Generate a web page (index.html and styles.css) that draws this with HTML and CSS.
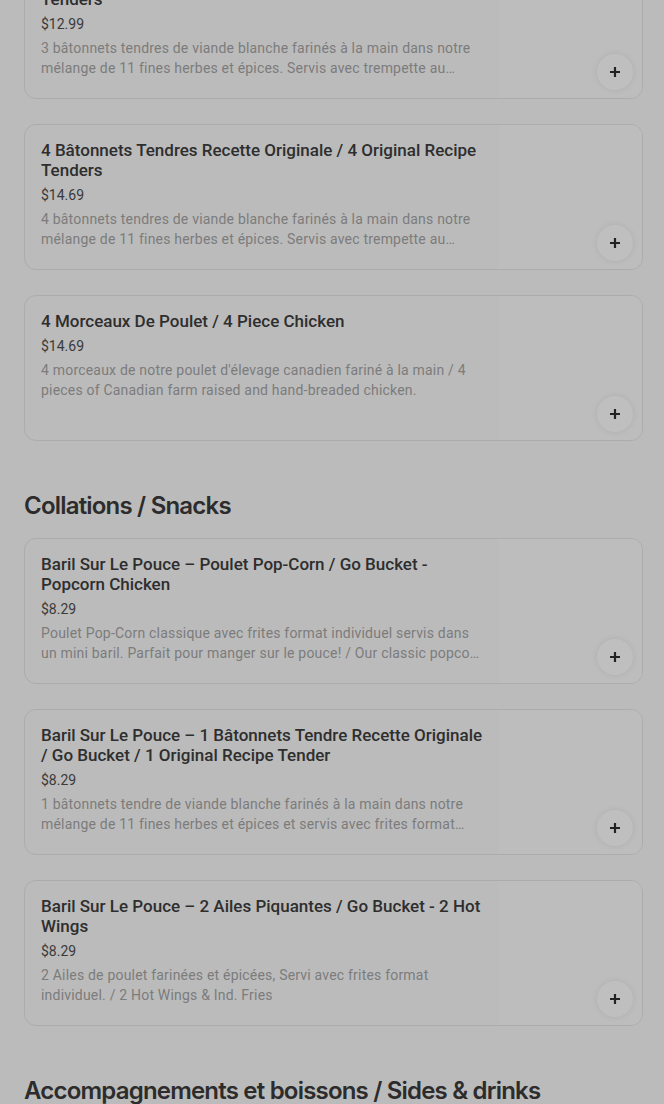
FILE: index.html
```html
<!DOCTYPE html>
<html lang="fr">
<head>
<meta charset="utf-8">
<title>Menu</title>
<link rel="stylesheet" href="styles.css">
</head>
<body>
<main class="menu">
  <section class="section">
    <ul class="items">
      <li class="card">
        <div class="info">
          <h3 class="name">3 Bâtonnets Tendres Recette Originale / 3 Original Recipe Tenders</h3>
          <div class="price">$12.99</div>
          <p class="desc">3 bâtonnets tendres de viande blanche farinés à la main dans notre mélange de 11 fines herbes et épices. Servis avec trempette au choix. / 3 hand-breaded white meat tenders.</p>
        </div>
        <div class="media"><button class="add" aria-label="Ajouter"><svg viewBox="0 0 12 12" width="12" height="12"><path d="M6 1v10M1 6h10" stroke="currentColor" stroke-width="2.2"/></svg></button></div>
      </li>
      <li class="card">
        <div class="info">
          <h3 class="name">4 Bâtonnets Tendres Recette Originale / 4 Original Recipe Tenders</h3>
          <div class="price">$14.69</div>
          <p class="desc">4 bâtonnets tendres de viande blanche farinés à la main dans notre mélange de 11 fines herbes et épices. Servis avec trempette au choix. / 4 hand-breaded white meat tenders.</p>
        </div>
        <div class="media"><button class="add" aria-label="Ajouter"><svg viewBox="0 0 12 12" width="12" height="12"><path d="M6 1v10M1 6h10" stroke="currentColor" stroke-width="2.2"/></svg></button></div>
      </li>
      <li class="card">
        <div class="info">
          <h3 class="name">4 Morceaux De Poulet / 4 Piece Chicken</h3>
          <div class="price">$14.69</div>
          <p class="desc">4 morceaux de notre poulet d'élevage canadien fariné à la main / 4 pieces of Canadian farm raised and hand-breaded chicken.</p>
        </div>
        <div class="media"><button class="add" aria-label="Ajouter"><svg viewBox="0 0 12 12" width="12" height="12"><path d="M6 1v10M1 6h10" stroke="currentColor" stroke-width="2.2"/></svg></button></div>
      </li>
    </ul>
  </section>

  <section class="section">
    <h2 class="heading">Collations / Snacks</h2>
    <ul class="items">
      <li class="card">
        <div class="info">
          <h3 class="name">Baril Sur Le Pouce – Poulet Pop-Corn / Go Bucket - Popcorn Chicken</h3>
          <div class="price">$8.29</div>
          <p class="desc">Poulet Pop-Corn classique avec frites format individuel servis dans un mini baril. Parfait pour manger sur le pouce! / Our classic popcorn chicken with individual fries.</p>
        </div>
        <div class="media"><button class="add" aria-label="Ajouter"><svg viewBox="0 0 12 12" width="12" height="12"><path d="M6 1v10M1 6h10" stroke="currentColor" stroke-width="2.2"/></svg></button></div>
      </li>
      <li class="card">
        <div class="info">
          <h3 class="name">Baril Sur Le Pouce – 1 Bâtonnets Tendre Recette Originale / Go Bucket / 1 Original Recipe Tender</h3>
          <div class="price">$8.29</div>
          <p class="desc">1 bâtonnets tendre de viande blanche farinés à la main dans notre mélange de 11 fines herbes et épices et servis avec frites format individuel. / 1 Original Recipe Tender.</p>
        </div>
        <div class="media"><button class="add" aria-label="Ajouter"><svg viewBox="0 0 12 12" width="12" height="12"><path d="M6 1v10M1 6h10" stroke="currentColor" stroke-width="2.2"/></svg></button></div>
      </li>
      <li class="card">
        <div class="info">
          <h3 class="name">Baril Sur Le Pouce – 2 Ailes Piquantes / Go Bucket - 2 Hot Wings</h3>
          <div class="price">$8.29</div>
          <p class="desc">2 Ailes de poulet farinées et épicées, Servi avec frites format individuel. / 2 Hot Wings &amp; Ind. Fries</p>
        </div>
        <div class="media"><button class="add" aria-label="Ajouter"><svg viewBox="0 0 12 12" width="12" height="12"><path d="M6 1v10M1 6h10" stroke="currentColor" stroke-width="2.2"/></svg></button></div>
      </li>
    </ul>
  </section>

  <section class="section">
    <h2 class="heading">Accompagnements et boissons / Sides &amp; drinks</h2>
  </section>
</main>
</body>
</html>
```

FILE: styles.css
```css
* { box-sizing: border-box; }
html, body {
  margin: 0;
  background: #bbbbbb;
}
body {
  font-family: Roboto, "Noto Sans", sans-serif;
  color: #2e2e2e;
  overflow: hidden;
}
.menu {
  padding: 0 21px 0 24px;
  margin-top: -47px;
}
.section { margin: 0; }
.heading {
  margin: 49px 0 16px;
  font-family: Inter, "Noto Sans", sans-serif;
  font-size: 24px;
  line-height: 32px;
  font-weight: 600;
  letter-spacing: -0.8px;
  color: #2c2c2c;
}
.items {
  list-style: none;
  margin: 0;
  padding: 0;
  display: flex;
  flex-direction: column;
  gap: 25px;
}
.card {
  display: flex;
  height: 146px;
  border: 1px solid #acacac;
  border-radius: 12px;
  overflow: hidden;
}
.info {
  flex: 1;
  min-width: 0;
  padding: 15px 16px 0 16px;
}
.name {
  margin: 0;
  font-size: 17px;
  line-height: 20px;
  font-weight: 500;
  color: #2e2e2e;
}
.price {
  margin-top: 5px;
  font-size: 14px;
  line-height: 20px;
  color: #3a3a3a;
}
.desc {
  margin: 4px 0 0;
  font-size: 14px;
  line-height: 20px;
  letter-spacing: 0.2px;
  color: #7c7c7c;
  display: -webkit-box;
  -webkit-line-clamp: 2;
  -webkit-box-orient: vertical;
  overflow: hidden;
}
.media {
  width: 143px;
  flex: none;
  background: #bdbdbd;
  display: flex;
  align-items: flex-end;
  justify-content: flex-end;
  padding: 0 9px 8px 0;
}
.add {
  width: 36px;
  height: 36px;
  border: none;
  border-radius: 50%;
  background: #bfbfbf;
  box-shadow: 0 0 6px rgba(0,0,0,0.08);
  color: #222;
  display: flex;
  align-items: center;
  justify-content: center;
  padding: 0;
}
```
